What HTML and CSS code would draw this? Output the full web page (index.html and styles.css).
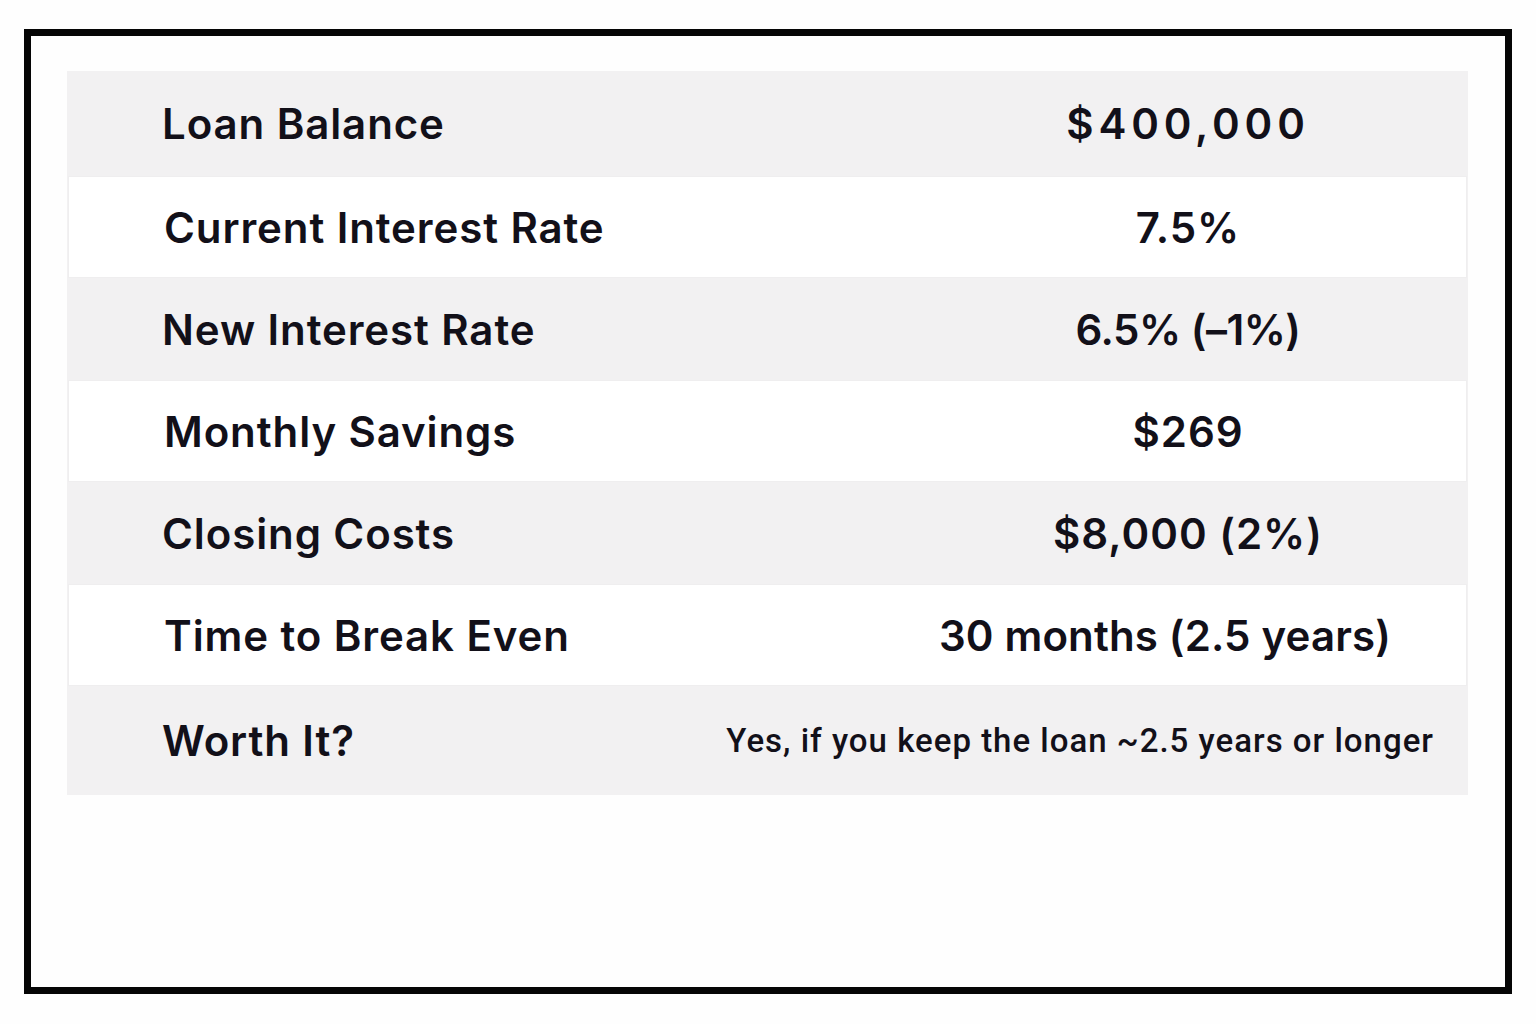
FILE: index.html
```html
<!DOCTYPE html>
<html lang="en">
<head>
<meta charset="utf-8">
<title>Refinance Break-Even</title>
<link rel="stylesheet" href="styles.css">
</head>
<body>
<div class="frame">
  <div class="table">
    <div class="row row-grey row-first">
      <div class="label">Loan Balance</div>
      <div class="value value-wide">$400,000</div>
    </div>
    <div class="row row-white">
      <div class="label">Current Interest Rate</div>
      <div class="value">7.5%</div>
    </div>
    <div class="row row-grey">
      <div class="label">New Interest Rate</div>
      <div class="value value-tight">6.5% (–1%)</div>
    </div>
    <div class="row row-white">
      <div class="label">Monthly Savings</div>
      <div class="value">$269</div>
    </div>
    <div class="row row-grey">
      <div class="label">Closing Costs</div>
      <div class="value">$8,000 (2%)</div>
    </div>
    <div class="row row-white">
      <div class="label">Time to Break Even</div>
      <div class="value value-shift">30 months (2.5 years)</div>
    </div>
    <div class="row row-grey row-last">
      <div class="label">Worth It?</div>
      <div class="value value-small">Yes, if you keep the loan ~2.5 years or longer</div>
    </div>
  </div>
</div>
</body>
</html>
```
FILE: styles.css
```css
html, body {
  margin: 0;
  padding: 0;
  background: #fefefe;
}

body {
  width: 1536px;
  height: 1024px;
  font-family: "Inter", "Lato", sans-serif;
  color: #121019;
}

.frame {
  box-sizing: border-box;
  margin: 29px 0 0 24px;
  width: 1488px;
  height: 965px;
  border: 7px solid #050505;
  background: #fefefe;
  padding: 35px 37px 0 36px;
}

.table {
  display: flex;
  flex-direction: column;
  background: #f2f1f2;
}

.row {
  box-sizing: border-box;
  display: flex;
  align-items: center;
  height: 102px;
}

.row-first { height: 105px; }
.row-last { height: 109px; }

.row-white {
  background: #ffffff;
  border: 1px solid #efeeef;
  margin: 0 1px 0 1px;
}

.label {
  box-sizing: border-box;
  flex: 0 0 841px;
  padding-left: 95px;
  font-size: 42px;
  font-weight: 600;
  letter-spacing: 0.9px;
  white-space: nowrap;
}

.value {
  flex: 1 1 auto;
  min-width: 0;
  display: flex;
  justify-content: center;
  font-size: 42px;
  font-weight: 600;
  letter-spacing: 1px;
  white-space: nowrap;
}

.value-wide {
  letter-spacing: 4.8px;
}

.value-tight {
  letter-spacing: -0.5px;
}

.value-shift {
  padding-right: 46px;
  letter-spacing: 0.15px;
}

.value-small {
  justify-content: flex-end;
  padding-right: 34px;
  font-family: "Roboto", "Inter", sans-serif;
  font-size: 33px;
  font-weight: 500;
  letter-spacing: 1px;
}
```
